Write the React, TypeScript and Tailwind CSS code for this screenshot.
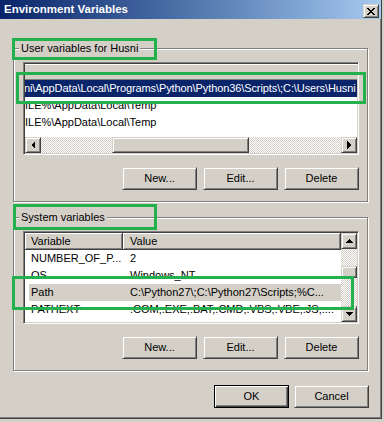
import React from "react";

const raised =
  "bg-[#d4d0c8] border border-t-[#d4d0c8] border-l-[#d4d0c8] border-r-[#404040] border-b-[#404040] shadow-[inset_1px_1px_0_#fff,inset_-1px_-1px_0_#808080]";
const checker =
  "bg-[repeating-conic-gradient(#ffffff_0_25%,#d4d0c8_0_50%)] bg-[length:2px_2px]";

type Dir = "left" | "right" | "up" | "down";

const Arrow = ({ dir }: { dir: Dir }) => {
  const pts: Record<Dir, string> = {
    left: "4,0 4,8 0,4",
    right: "0,0 0,8 4,4",
    up: "0,4 8,4 4,0",
    down: "0,0 8,0 4,4",
  };
  const horiz = dir === "left" || dir === "right";
  return (
    <svg
      width={horiz ? 4 : 8}
      height={horiz ? 8 : 4}
      viewBox={horiz ? "0 0 4 8" : "0 0 8 4"}
      shapeRendering="crispEdges"
    >
      <polygon points={pts[dir]} fill="#000" />
    </svg>
  );
};

const ScrollBtn = ({ dir, className = "" }: { dir: Dir; className?: string }) => (
  <div className={`${raised} w-[16px] h-[16px] shrink-0 flex items-center justify-center ${className}`}>
    <Arrow dir={dir} />
  </div>
);

const Button = ({ label, isDefault = false }: { label: string; isDefault?: boolean }) => (
  <div
    className={
      isDefault
        ? "w-[75px] h-[23px] bg-[#d4d0c8] border border-black shadow-[inset_1px_1px_0_#fff,inset_-1px_-1px_0_#404040,inset_-2px_-2px_0_#808080] flex items-center justify-center"
        : `${raised} w-[75px] h-[23px] flex items-center justify-center`
    }
  >
    {label}
  </div>
);

const ButtonRow = () => (
  <div className="flex justify-end gap-[6px] mt-[12px]">
    <Button label="New..." />
    <Button label="Edit..." />
    <Button label="Delete" />
  </div>
);

const GroupBox = ({
  title,
  className = "",
  children,
}: {
  title: string;
  className?: string;
  children: React.ReactNode;
}) => (
  <div
    className={`relative w-[355px] h-[154px] border border-[#808080] shadow-[inset_1px_1px_0_#fff,1px_1px_0_#fff] pt-[13px] pl-[9px] pr-[8px] pb-[11px] flex flex-col ${className}`}
  >
    <span className="absolute -top-[8px] left-[5px] px-[2px] bg-[#d4d0c8] leading-[14px]">
      {title}
    </span>
    {children}
  </div>
);

const listFrame =
  "h-[93px] bg-white border border-t-[#808080] border-l-[#808080] border-r-white border-b-white shadow-[inset_1px_1px_0_#404040,inset_-1px_-1px_0_#d4d0c8] p-[1px] overflow-hidden";

const sysRows = [
  { name: "NUMBER_OF_P...", value: "2" },
  { name: "OS", value: "Windows_NT" },
  { name: "Path", value: "C:\\Python27\\;C:\\Python27\\Scripts;%C...", selected: true },
  { name: "PATHEXT", value: ".COM;.EXE;.BAT;.CMD;.VBS;.VBE;.JS;...." },
];

export default function App() {
  return (
    <div className="w-[384px] h-[422px] bg-[#d4d0c8] relative overflow-hidden font-['Liberation_Sans',Arial,sans-serif] text-[11px] text-black">
      <div className="w-[382px] h-[419px] border-r border-b border-[#404040] shadow-[inset_-1px_-1px_0_#808080] flex flex-col">
        {/* Title bar */}
        <div className="h-[19px] shrink-0 bg-linear-to-r from-[#0a246a] to-[#a6caf0] flex items-start justify-between pl-[4px] pr-[2px]">
          <span className="text-white font-bold text-[11.5px] leading-[19px]">Environment Variables</span>
          <div className={`${raised} mt-[4px] w-[16px] h-[14px] flex items-center justify-center`}>
            <svg width="8" height="7" viewBox="0 0 8 7" shapeRendering="crispEdges">
              <path d="M0 0h2v1h-2zM6 0h2v1h-2zM1 1h2v1h-2zM5 1h2v1h-2zM2 2h4v1h-4zM3 3h2v1h-2zM2 4h4v1h-4zM1 5h2v1h-2zM5 5h2v1h-2zM0 6h2v1h-2zM6 6h2v1h-2z" fill="#000" />
            </svg>
          </div>
        </div>

        <div className="px-[13px]">
          {/* User variables */}
          <GroupBox title="User variables for Husni" className="mt-[29px]">
            <div className={`${listFrame} flex flex-col`}>
              <div className="h-[16px] shrink-0 bg-[#d4d0c8] shadow-[inset_0_1px_0_#fff,inset_0_-1px_0_#808080]" />
              <div className="h-[17px] leading-[17px] bg-[#0a246a] text-white whitespace-nowrap overflow-hidden -indent-[1px] tracking-[-0.1px]">
                ni\AppData\Local\Programs\Python\Python36\Scripts\;C:\Users\Husni
              </div>
              <div className="h-[17px] leading-[17px] whitespace-nowrap overflow-hidden">ILE%\AppData\Local\Temp</div>
              <div className="h-[17px] leading-[17px] whitespace-nowrap overflow-hidden">ILE%\AppData\Local\Temp</div>
              <div className="mt-auto h-[16px] flex">
                <ScrollBtn dir="left" />
                <div className={`w-[71px] ${checker}`} />
                <div className={`${raised} w-[137px]`} />
                <div className={`flex-1 ${checker}`} />
                <ScrollBtn dir="right" />
              </div>
            </div>
            <ButtonRow />
          </GroupBox>

          {/* System variables */}
          <GroupBox title="System variables" className="mt-[15px]">
            <div className={`${listFrame} flex`}>
              <div className="flex-1 flex flex-col min-w-0">
                <div className="h-[17px] shrink-0 flex">
                  <div className="w-[98px] pl-[6px] leading-[16px] bg-[#d4d0c8] border-r border-b border-[#404040] shadow-[inset_1px_1px_0_#fff,inset_-1px_-1px_0_#808080]">
                    Variable
                  </div>
                  <div className="flex-1 pl-[7px] leading-[16px] bg-[#d4d0c8] border-r border-b border-[#404040] shadow-[inset_1px_1px_0_#fff,inset_-1px_-1px_0_#808080]">
                    Value
                  </div>
                </div>
                {sysRows.map((r) => (
                  <div
                    key={r.name}
                    className={`h-[17px] shrink-0 flex leading-[17px] whitespace-nowrap ${r.selected ? "ml-[4px] bg-[#d4d0c8]" : ""}`}
                  >
                    <div className={`${r.selected ? "w-[94px] pl-[2px]" : "w-[98px] pl-[6px]"} overflow-hidden`}>{r.name}</div>
                    <div className="flex-1 pl-[7px] overflow-hidden">{r.value}</div>
                  </div>
                ))}
              </div>
              <div className="w-[16px] flex flex-col">
                <ScrollBtn dir="up" />
                <div className={`h-[17px] ${checker}`} />
                <div className={`${raised} h-[12px]`} />
                <div className={`flex-1 ${checker}`} />
                <ScrollBtn dir="down" />
              </div>
            </div>
            <ButtonRow />
          </GroupBox>

          <div className="w-[356px] flex justify-end gap-[5px] mt-[14px]">
            <Button label="OK" isDefault />
            <Button label="Cancel" />
          </div>
        </div>
      </div>

      {/* Annotation boxes */}
      <div className="absolute left-[12px] top-[38px] w-[145px] h-[22px] border-[3px] border-[#22b14c]" />
      <div className="absolute left-[16px] top-[72px] w-[350px] h-[32px] border-[3px] border-[#22b14c]" />
      <div className="absolute left-[13px] top-[204px] w-[144px] h-[26px] border-[3px] border-[#22b14c]" />
      <div className="absolute left-[12px] top-[276px] w-[342px] h-[34px] border-[3px] border-[#22b14c]" />
    </div>
  );
}
